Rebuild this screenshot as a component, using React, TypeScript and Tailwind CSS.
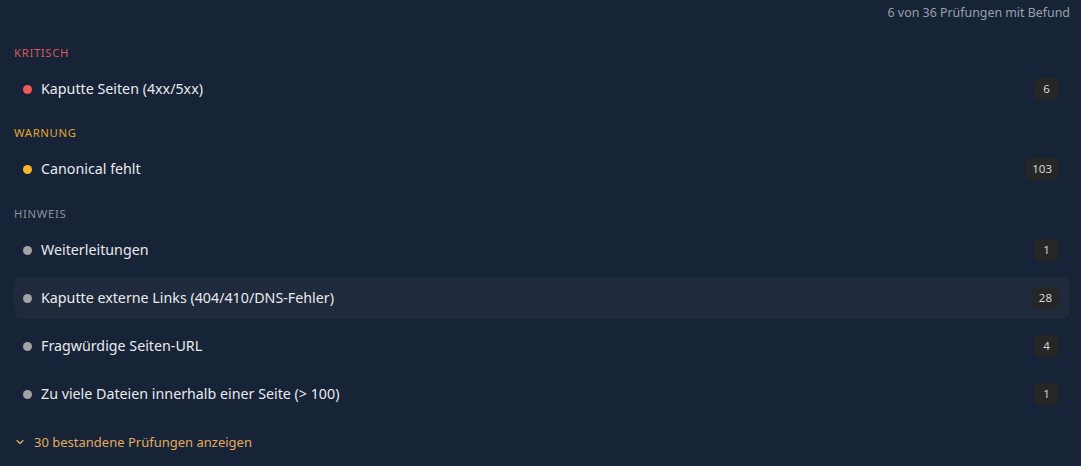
import { ChevronDown } from 'lucide-react';

type Check = { label: string; count: number; hover?: boolean };
type Group = { title: string; titleClass: string; dotClass: string; items: Check[] };

const groups: Group[] = [
  {
    title: 'Kritisch',
    titleClass: 'text-[#d9575a]',
    dotClass: 'bg-[#f05a5a]',
    items: [{ label: 'Kaputte Seiten (4xx/5xx)', count: 6 }],
  },
  {
    title: 'Warnung',
    titleClass: 'text-[#e0a82e]',
    dotClass: 'bg-[#f8b82b]',
    items: [{ label: 'Canonical fehlt', count: 103 }],
  },
  {
    title: 'Hinweis',
    titleClass: 'text-[#8b929c]',
    dotClass: 'bg-[#a3a3a6]',
    items: [
      { label: 'Weiterleitungen', count: 1 },
      { label: 'Kaputte externe Links (404/410/DNS-Fehler)', count: 28, hover: true },
      { label: 'Fragwürdige Seiten-URL', count: 4 },
      { label: 'Zu viele Dateien innerhalb einer Seite (> 100)', count: 1 },
    ],
  },
];

export default function App() {
  return (
    <div
      className="h-[466px] w-full overflow-hidden bg-[#172337] pl-[14px] pr-[11px] pt-[5px] text-[#e5e7eb]"
      style={{ fontFamily: '"Noto Sans", sans-serif' }}
    >
      <div className="flex justify-end text-[12.4px] leading-4 text-[#98a0ab]">
        <span>6 von 36 Prüfungen mit Befund</span>
      </div>

      <div className="mt-[24px] flex flex-col gap-[15px]">
        {groups.map((g, gi) => (
          <section key={g.title} className={gi === 2 ? 'mt-[1px]' : ''}>
            <h3 className={`mb-[7px] text-[11.3px] uppercase leading-4 tracking-[0.06em] ${g.titleClass}`}>
              {g.title}
            </h3>
            <ul className="flex flex-col gap-[6px]">
              {g.items.map((item) => (
                <li
                  key={item.label}
                  className={`flex h-[42px] items-center rounded-lg pl-[9px] pr-[11px] ${item.hover ? 'bg-[#1f2a3c]' : ''}`}
                >
                  <span className={`h-[9px] w-[9px] shrink-0 rounded-full ${g.dotClass}`} />
                  <span className="ml-[9px] flex-1 text-[14.25px] leading-5 text-[#e8eaed]">{item.label}</span>
                  <span className="flex h-[22px] min-w-[25px] items-center justify-center rounded-md bg-[#262626] px-[7px] text-[11.5px] text-[#d4d4d4]">
                    {item.count}
                  </span>
                </li>
              ))}
            </ul>
          </section>
        ))}
      </div>

      <button className="mt-[17px] flex items-center gap-[8px] text-[13px] leading-5 text-[#e3ab5e]">
        <ChevronDown size={12} strokeWidth={2.5} />
        30 bestandene Prüfungen anzeigen
      </button>
    </div>
  );
}
